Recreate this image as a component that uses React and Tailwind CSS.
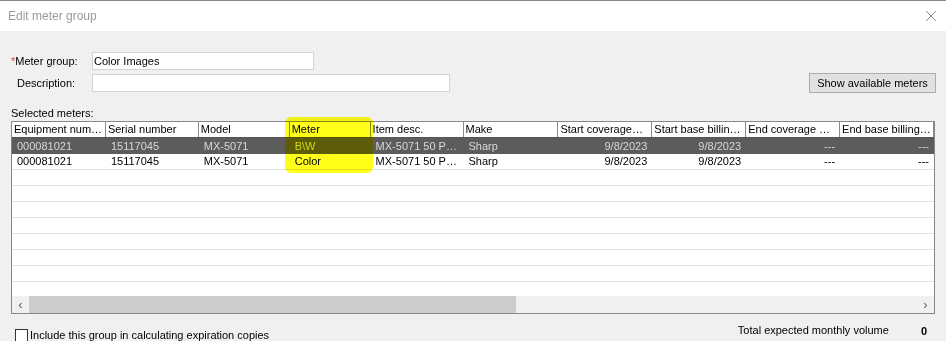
import React from 'react';

const cols = [
  { label: 'Equipment num…', w: 94 },
  { label: 'Serial number', w: 93 },
  { label: 'Model', w: 91 },
  { label: 'Meter', w: 81 },
  { label: 'Item desc.', w: 93 },
  { label: 'Make', w: 95 },
  { label: 'Start coverage…', w: 94, right: true },
  { label: 'Start base billin…', w: 94, right: true },
  { label: 'End coverage …', w: 94, right: true },
  { label: 'End base billing…', w: 94, right: true },
];

const rows = [
  ['000081021', '15117045', 'MX-5071', 'B\\W', 'MX-5071 50 P…', 'Sharp', '9/8/2023', '9/8/2023', '---', '---'],
  ['000081021', '15117045', 'MX-5071', 'Color', 'MX-5071 50 P…', 'Sharp', '9/8/2023', '9/8/2023', '---', '---'],
];

const font = { fontFamily: '"Liberation Sans", Arial, sans-serif' };

const App = () => {
  return (
    <div className='w-[946px] h-[341px] overflow-hidden bg-[#f0f0f0] text-[11px] text-black flex flex-col' style={font}>
      {/* title bar */}
      <div className='h-[31px] bg-white border-t border-[#8a8a8a] flex items-center justify-between pl-2 pr-[8px] shrink-0'>
        <span className='text-[12px] text-[#9a9a9a]'>Edit meter group</span>
        <svg width='12' height='12' viewBox='0 0 12 12' className='mr-[1px]'>
          <path d='M1 1 L11 11 M11 1 L1 11' stroke='#8c8c8c' strokeWidth='1' />
        </svg>
      </div>

      <div className='flex flex-col pl-[11px] pr-[11px] pt-[21px]'>
        {/* form */}
        <div className='flex items-center h-[18px]'>
          <span className='w-[81px]'><span className='text-[#e04040]'>*</span>Meter group:</span>
          <div className='w-[222px] h-[18px] bg-white border border-[#d4d4d4] flex items-center px-[1px]'>Color Images</div>
        </div>
        <div className='flex items-center h-[20px] mt-[3px]'>
          <span className='w-[81px] pl-[6px]'>Description:</span>
          <div className='w-[358px] h-[18px] bg-white border border-[#d4d4d4]' />
          <div className='flex-1' />
          <button className='h-[20px] w-[127px] mr-[-1px] bg-[#e1e1e1] border border-[#adadad] text-[11px]'>Show available meters</button>
        </div>
        <div className='mt-[14px] leading-[12px]'>Selected meters:</div>

        {/* table */}
        <div className='relative mt-[2px] w-[924px] h-[193px] bg-white border border-[#828790] flex flex-col'>
          <div className='flex h-[16px] bg-white border-b border-[#555]'>
            {cols.map((c, i) => (
              <div
                key={i}
                style={{ width: c.w }}
                className='h-full border-r border-[#8a8a8a] px-[2px] flex items-center whitespace-nowrap overflow-hidden leading-none'
              >
                {c.label}
              </div>
            ))}
          </div>
          {rows.map((r, ri) => (
            <div
              key={ri}
              className={
                ri === 0
                  ? 'flex h-[16px] bg-[#5c5c5c] text-[#d8d8d8]'
                  : 'flex h-[16px] bg-white border-b border-[#e3e3e3]'
              }
            >
              {r.map((cell, ci) => (
                <div
                  key={ci}
                  style={{ width: cols[ci].w }}
                  className={
                    'h-full flex items-center whitespace-nowrap overflow-hidden leading-none ' +
                    (cols[ci].right ? 'justify-end pr-[5px]' : 'pl-[5px]')
                  }
                >
                  {cell}
                </div>
              ))}
            </div>
          ))}
          {[0, 1, 2, 3, 4, 5, 6].map((i) => (
            <div key={i} className='h-[16px] shrink-0 border-b border-[#e3e3e3]' />
          ))}
          <div className='flex-1' />
          {/* horizontal scrollbar */}
          <div className='h-[17px] flex items-center bg-[#f0f0f0]'>
            <span className='w-[17px] text-center text-[#606060] text-[13px] leading-none'>‹</span>
            <div className='w-[487px] h-full bg-[#cdcdcd]' />
            <div className='flex-1' />
            <span className='w-[17px] text-center text-[#606060] text-[13px] leading-none'>›</span>
          </div>

          {/* yellow marker highlight */}
          <div className='absolute left-[273px] top-[-5px] w-[88px] h-[56px] rounded-[6px] bg-[#ffff00] opacity-90 mix-blend-multiply pointer-events-none' />
        </div>

        {/* footer */}
        <div className='flex items-center mt-[13px]'>
          <div className='ml-[4px] w-[13px] h-[13px] bg-white border border-[#333]' />
          <span className='ml-[2px]'>Include this group in calculating expiration copies</span>
          <div className='flex-1' />
          <span className='mt-[-10px]'>Total expected monthly volume</span>
          <span className='mt-[-8px] ml-[32px] mr-[8px] font-bold'>0</span>
        </div>
      </div>
    </div>
  );
};

export default App;
